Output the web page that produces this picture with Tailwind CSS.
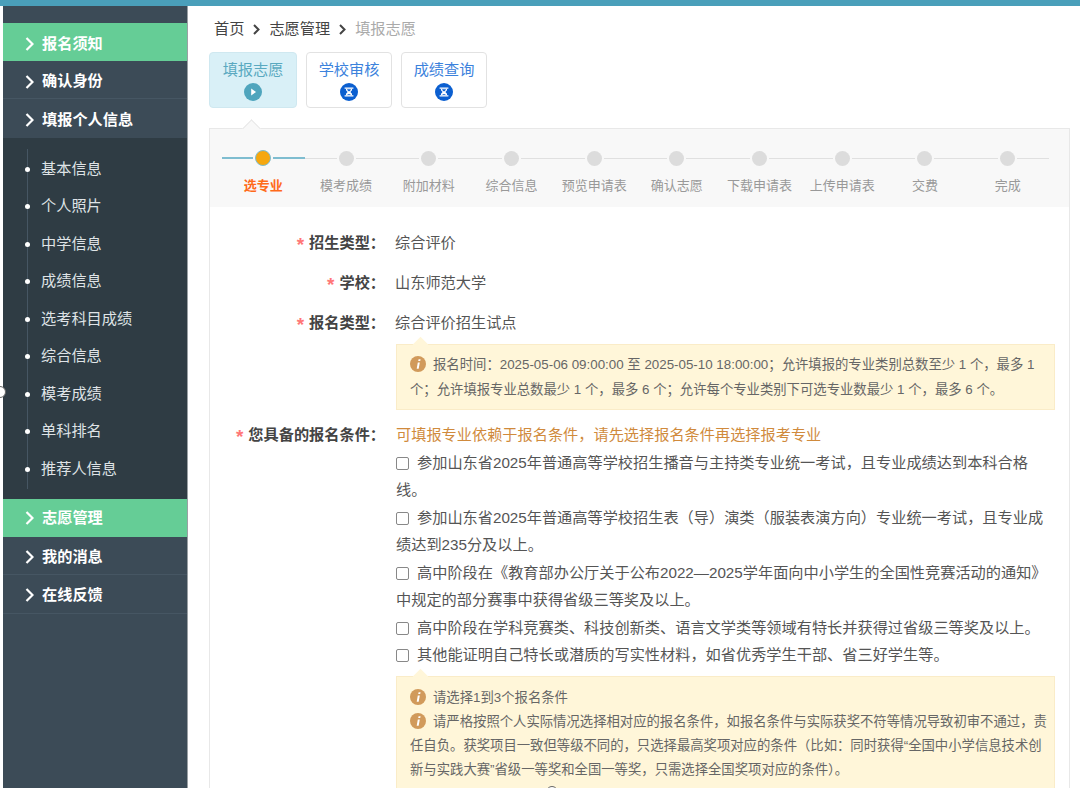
<!DOCTYPE html>
<html lang="zh">
<head>
<meta charset="utf-8">
<script src="https://cdn.jsdelivr.net/npm/@tailwindcss/browser@4"></script>
</head>
<body class="bg-white">
<div class="w-[1080px] h-[788px] overflow-hidden relative flex flex-col font-['Liberation_Sans','Noto_Sans_CJK_SC',sans-serif] text-[#555]">
  <div class="h-[6px] shrink-0 bg-[#4a9fba]"></div>
  <div class="flex flex-1 min-h-0">
    <!-- sidebar -->
    <aside class="ml-[3px] w-[185px] shrink-0 bg-[#3c4b57] border-r border-[#9aa0a4] pt-[17px] text-[15.2px] font-bold text-white flex flex-col">
      <div class="h-[38px] bg-[#65cd96] flex items-center pl-[22px] pt-[4px] gap-[8px]"><svg class="w-[9px] h-[14px]" viewBox="0 0 9 14" fill="none" stroke="currentColor" stroke-width="2.2"><path d="M1.5 1l6 6-6 6"/></svg>报名须知</div>
      <div class="h-[38px] border-b border-[#465663] flex items-center pl-[22px] pt-[4px] gap-[8px]"><svg class="w-[9px] h-[14px]" viewBox="0 0 9 14" fill="none" stroke="currentColor" stroke-width="2.2"><path d="M1.5 1l6 6-6 6"/></svg>确认身份</div>
      <div class="h-[39px] flex items-center pl-[22px] pt-[3px] gap-[8px]"><svg class="w-[9px] h-[14px]" viewBox="0 0 9 14" fill="none" stroke="currentColor" stroke-width="2.2"><path d="M1.5 1l6 6-6 6"/></svg>填报个人信息</div>
      <div class="h-[361px] bg-[#2f3c44] pt-[11px] pl-[24px] font-normal text-[#dfe3e6]">
        <div class="border-l border-[#465663] h-[340px] flex flex-col">
          <div class="h-[37.5px] flex items-center relative pl-[13px] pt-[3px]"><span class="absolute left-[-3px] w-[5px] h-[5px] rounded-full bg-white"></span>基本信息</div>
          <div class="h-[37.5px] flex items-center relative pl-[13px] pt-[3px]"><span class="absolute left-[-3px] w-[5px] h-[5px] rounded-full bg-white"></span>个人照片</div>
          <div class="h-[37.5px] flex items-center relative pl-[13px] pt-[3px]"><span class="absolute left-[-3px] w-[5px] h-[5px] rounded-full bg-white"></span>中学信息</div>
          <div class="h-[37.5px] flex items-center relative pl-[13px] pt-[3px]"><span class="absolute left-[-3px] w-[5px] h-[5px] rounded-full bg-white"></span>成绩信息</div>
          <div class="h-[37.5px] flex items-center relative pl-[13px] pt-[3px]"><span class="absolute left-[-3px] w-[5px] h-[5px] rounded-full bg-white"></span>选考科目成绩</div>
          <div class="h-[37.5px] flex items-center relative pl-[13px] pt-[3px]"><span class="absolute left-[-3px] w-[5px] h-[5px] rounded-full bg-white"></span>综合信息</div>
          <div class="h-[37.5px] flex items-center relative pl-[13px] pt-[3px]"><span class="absolute left-[-3px] w-[5px] h-[5px] rounded-full bg-white"></span>模考成绩</div>
          <div class="h-[37.5px] flex items-center relative pl-[13px] pt-[3px]"><span class="absolute left-[-3px] w-[5px] h-[5px] rounded-full bg-white"></span>单科排名</div>
          <div class="h-[37.5px] flex items-center relative pl-[13px] pt-[3px]"><span class="absolute left-[-3px] w-[5px] h-[5px] rounded-full bg-white"></span>推荐人信息</div>
        </div>
      </div>
      <div class="h-[38px] bg-[#65cd96] flex items-center pl-[22px] gap-[8px]"><svg class="w-[9px] h-[14px]" viewBox="0 0 9 14" fill="none" stroke="currentColor" stroke-width="2.2"><path d="M1.5 1l6 6-6 6"/></svg>志愿管理</div>
      <div class="h-[38px] border-b border-[#465663] flex items-center pl-[22px] pt-[3px] gap-[8px]"><svg class="w-[9px] h-[14px]" viewBox="0 0 9 14" fill="none" stroke="currentColor" stroke-width="2.2"><path d="M1.5 1l6 6-6 6"/></svg>我的消息</div>
      <div class="h-[39px] border-b border-[#465663] flex items-center pl-[22px] pt-[2px] gap-[8px]"><svg class="w-[9px] h-[14px]" viewBox="0 0 9 14" fill="none" stroke="currentColor" stroke-width="2.2"><path d="M1.5 1l6 6-6 6"/></svg>在线反馈</div>
    </aside>
    <!-- main -->
    <main class="flex-1 min-w-0 pl-[21px] pr-[10px]">
      <div class="h-[46px] pl-[5px] flex items-center gap-[9px] text-[15.2px] text-[#444]">
        <span>首页</span>
        <svg class="w-[7px] h-[11px]" viewBox="0 0 7 11" fill="none" stroke="#444" stroke-width="2"><path d="M1 1l4.5 4.5L1 10"/></svg>
        <span>志愿管理</span>
        <svg class="w-[7px] h-[11px]" viewBox="0 0 7 11" fill="none" stroke="#444" stroke-width="2"><path d="M1 1l4.5 4.5L1 10"/></svg>
        <span class="text-[#aaa]">填报志愿</span>
      </div>
      <div class="flex gap-[9px] h-[56px] text-[15.2px]">
        <div class="w-[88px] rounded-[4px] bg-[#d9f0f7] border border-[#cfe8f0] flex flex-col items-center pt-[5px] text-[#5aa9c0]">
          <span class="leading-[24px]">填报志愿</span>
          <svg class="w-[18px] h-[18px] mt-[1px]" viewBox="0 0 18 18"><circle cx="9" cy="9" r="9" fill="#4fa5bd"/><path d="M7.2 5.6l4.8 3.4-4.8 3.4z" fill="#fff"/></svg>
        </div>
        <div class="w-[86px] rounded-[4px] bg-white border border-[#e2e2e2] flex flex-col items-center pt-[5px] text-[#3c82dc]">
          <span class="leading-[24px]">学校审核</span>
          <svg class="w-[18px] h-[18px] mt-[1px]" viewBox="0 0 18 18"><circle cx="9" cy="9" r="9" fill="#0b5fd0"/><path d="M4.6 4.4h8.8v1.3H4.6zM4.6 12.3h8.8v1.3H4.6z" fill="#fff"/><path d="M6 5.7h6v1.6L10.4 9l1.6 1.7v1.6H6v-1.6L7.6 9 6 7.3z" fill="#fff"/><path d="M7.2 6.3h3.6v.7L9 8.4 7.2 7zM7.6 11h2.8v.7H7.6z" fill="#0b5fd0"/></svg>
        </div>
        <div class="w-[86px] rounded-[4px] bg-white border border-[#e2e2e2] flex flex-col items-center pt-[5px] text-[#3c82dc]">
          <span class="leading-[24px]">成绩查询</span>
          <svg class="w-[18px] h-[18px] mt-[1px]" viewBox="0 0 18 18"><circle cx="9" cy="9" r="9" fill="#0b5fd0"/><path d="M4.6 4.4h8.8v1.3H4.6zM4.6 12.3h8.8v1.3H4.6z" fill="#fff"/><path d="M6 5.7h6v1.6L10.4 9l1.6 1.7v1.6H6v-1.6L7.6 9 6 7.3z" fill="#fff"/><path d="M7.2 6.3h3.6v.7L9 8.4 7.2 7zM7.6 11h2.8v.7H7.6z" fill="#0b5fd0"/></svg>
        </div>
      </div>
      <!-- panel -->
      <div class="mt-[20px] relative border border-[#e8e8e8] border-b-0 h-[700px]">
        <span class="absolute left-[35px] top-[-7px] w-[13px] h-[13px] rotate-45 bg-[#f8f8f8] border-l border-t border-[#e8e8e8]"></span>
        <div class="h-[78px] bg-[#f8f8f8] pl-[12px] pr-[20px] pt-[20px] relative">
          <div class="flex">
            <div class="flex-1 flex flex-col items-center text-[13px]"><div class="flex items-center w-full h-[18px]"><span class="flex-1 h-[1.5px] bg-[#7fbdd0]"></span><span class="w-[16px] h-[16px] mx-[2px] rounded-full bg-[#f5a70f] border-[1.5px] border-[#7fbdd0]"></span><span class="flex-1 h-[1.5px] bg-[#7fbdd0]"></span></div><span class="mt-[9px] font-bold text-[#ff6a1a]">选专业</span></div>
            <div class="flex-1 flex flex-col items-center text-[13px]"><div class="flex items-center w-full h-[18px]"><span class="flex-1 h-px bg-[#e0e0e0]"></span><span class="w-[15px] h-[15px] mx-[2px] rounded-full bg-[#dcdcdc]"></span><span class="flex-1 h-px bg-[#e0e0e0]"></span></div><span class="mt-[9px] text-[#999]">模考成绩</span></div>
            <div class="flex-1 flex flex-col items-center text-[13px]"><div class="flex items-center w-full h-[18px]"><span class="flex-1 h-px bg-[#e0e0e0]"></span><span class="w-[15px] h-[15px] mx-[2px] rounded-full bg-[#dcdcdc]"></span><span class="flex-1 h-px bg-[#e0e0e0]"></span></div><span class="mt-[9px] text-[#999]">附加材料</span></div>
            <div class="flex-1 flex flex-col items-center text-[13px]"><div class="flex items-center w-full h-[18px]"><span class="flex-1 h-px bg-[#e0e0e0]"></span><span class="w-[15px] h-[15px] mx-[2px] rounded-full bg-[#dcdcdc]"></span><span class="flex-1 h-px bg-[#e0e0e0]"></span></div><span class="mt-[9px] text-[#999]">综合信息</span></div>
            <div class="flex-1 flex flex-col items-center text-[13px]"><div class="flex items-center w-full h-[18px]"><span class="flex-1 h-px bg-[#e0e0e0]"></span><span class="w-[15px] h-[15px] mx-[2px] rounded-full bg-[#dcdcdc]"></span><span class="flex-1 h-px bg-[#e0e0e0]"></span></div><span class="mt-[9px] text-[#999]">预览申请表</span></div>
            <div class="flex-1 flex flex-col items-center text-[13px]"><div class="flex items-center w-full h-[18px]"><span class="flex-1 h-px bg-[#e0e0e0]"></span><span class="w-[15px] h-[15px] mx-[2px] rounded-full bg-[#dcdcdc]"></span><span class="flex-1 h-px bg-[#e0e0e0]"></span></div><span class="mt-[9px] text-[#999]">确认志愿</span></div>
            <div class="flex-1 flex flex-col items-center text-[13px]"><div class="flex items-center w-full h-[18px]"><span class="flex-1 h-px bg-[#e0e0e0]"></span><span class="w-[15px] h-[15px] mx-[2px] rounded-full bg-[#dcdcdc]"></span><span class="flex-1 h-px bg-[#e0e0e0]"></span></div><span class="mt-[9px] text-[#999]">下载申请表</span></div>
            <div class="flex-1 flex flex-col items-center text-[13px]"><div class="flex items-center w-full h-[18px]"><span class="flex-1 h-px bg-[#e0e0e0]"></span><span class="w-[15px] h-[15px] mx-[2px] rounded-full bg-[#dcdcdc]"></span><span class="flex-1 h-px bg-[#e0e0e0]"></span></div><span class="mt-[9px] text-[#999]">上传申请表</span></div>
            <div class="flex-1 flex flex-col items-center text-[13px]"><div class="flex items-center w-full h-[18px]"><span class="flex-1 h-px bg-[#e0e0e0]"></span><span class="w-[15px] h-[15px] mx-[2px] rounded-full bg-[#dcdcdc]"></span><span class="flex-1 h-px bg-[#e0e0e0]"></span></div><span class="mt-[9px] text-[#999]">交费</span></div>
            <div class="flex-1 flex flex-col items-center text-[13px]"><div class="flex items-center w-full h-[18px]"><span class="flex-1 h-px bg-[#e0e0e0]"></span><span class="w-[15px] h-[15px] mx-[2px] rounded-full bg-[#dcdcdc]"></span><span class="flex-1 h-px bg-[#e0e0e0]"></span></div><span class="mt-[9px] text-[#999]">完成</span></div>
          </div>
        </div>
        <!-- form -->
        <div class="pt-[22px] text-[15.2px] leading-[27.5px] text-[#555]">
          <div class="flex h-[40px]"><div class="w-[175px] text-right font-bold text-[#444] shrink-0"><span class="text-[#f77] mr-[5px] text-[19px] leading-none align-[-3px]">*</span>招生类型&#xFF1A;</div><div class="ml-[10px]">综合评价</div></div>
          <div class="flex h-[40px]"><div class="w-[175px] text-right font-bold text-[#444] shrink-0"><span class="text-[#f77] mr-[5px] text-[19px] leading-none align-[-3px]">*</span>学校&#xFF1A;</div><div class="ml-[10px]">山东师范大学</div></div>
          <div class="flex h-[35px]"><div class="w-[175px] text-right font-bold text-[#444] shrink-0"><span class="text-[#f77] mr-[5px] text-[19px] leading-none align-[-3px]">*</span>报名类型&#xFF1A;</div><div class="ml-[10px]">综合评价招生试点</div></div>
          <div class="ml-[186px] w-[659px] h-[66px] relative bg-[#fff6d9] border border-[#faecc8] pl-[13px] pr-[7px] pt-[7px] text-[13.35px] leading-[25px] text-[#666]">
            <span class="absolute left-[18px] top-[-6px] w-[11px] h-[11px] rotate-45 bg-[#fff6d9]"></span>
            <svg class="inline-block w-[16px] h-[16px] mr-[7px] align-[-3px] relative" viewBox="0 0 16 16"><circle cx="8" cy="8" r="8" fill="#d19a5b"/><path d="M8.6 3.2h2l-.4 1.8h-2zM7.8 6.4h2L8.7 12.8H6.7z" fill="#fff"/></svg>报名时间&#xFF1A;2025-05-06 09:00:00 至 2025-05-10 18:00:00&#xFF1B;允许填报的专业类别总数至少 1 个&#xFF0C;最多 1 个&#xFF1B;允许填报专业总数最少 1 个&#xFF0C;最多 6 个&#xFF1B;允许每个专业类别下可选专业数最少 1 个&#xFF0C;最多 6 个。
          </div>
          <div class="flex mt-[11px]">
            <div class="w-[175px] text-right font-bold text-[#444] shrink-0"><span class="text-[#f77] mr-[5px] text-[19px] leading-none align-[-3px]">*</span>您具备的报名条件&#xFF1A;</div>
            <div class="ml-[11px] w-[659px]">
              <div class="text-[#d08a3c]">可填报专业依赖于报名条件&#xFF0C;请先选择报名条件再选择报考专业</div>
              <div><span class="inline-block w-[13px] h-[13px] rounded-[2px] border border-[#888] bg-white mr-[8px] align-[-2px]"></span>参加山东省2025年普通高等学校招生播音与主持类专业统一考试&#xFF0C;且专业成绩达到本科合格线。</div>
              <div><span class="inline-block w-[13px] h-[13px] rounded-[2px] border border-[#888] bg-white mr-[8px] align-[-2px]"></span>参加山东省2025年普通高等学校招生表&#xFF08;导&#xFF09;演类&#xFF08;服装表演方向&#xFF09;专业统一考试&#xFF0C;且专业成绩达到235分及以上。</div>
              <div><span class="inline-block w-[13px] h-[13px] rounded-[2px] border border-[#888] bg-white mr-[8px] align-[-2px]"></span>高中阶段在《教育部办公厅关于公布2022—2025学年面向中小学生的全国性竞赛活动的通知》中规定的部分赛事中获得省级三等奖及以上。</div>
              <div><span class="inline-block w-[13px] h-[13px] rounded-[2px] border border-[#888] bg-white mr-[8px] align-[-2px]"></span>高中阶段在学科竞赛类、科技创新类、语言文学类等领域有特长并获得过省级三等奖及以上。</div>
              <div><span class="inline-block w-[13px] h-[13px] rounded-[2px] border border-[#888] bg-white mr-[8px] align-[-2px]"></span>其他能证明自己特长或潜质的写实性材料&#xFF0C;如省优秀学生干部、省三好学生等。</div>
              <div class="mt-[7px] h-[113px] relative bg-[#fff6d9] border border-[#faecc8] pl-[13px] pr-[7px] pt-[9px] text-[13.35px] leading-[24px] text-[#666]">
                <span class="absolute left-[18px] top-[-6px] w-[11px] h-[11px] rotate-45 bg-[#fff6d9]"></span>
                <div class="relative"><svg class="inline-block w-[16px] h-[16px] mr-[7px] align-[-3px]" viewBox="0 0 16 16"><circle cx="8" cy="8" r="8" fill="#d19a5b"/><path d="M8.6 3.2h2l-.4 1.8h-2zM7.8 6.4h2L8.7 12.8H6.7z" fill="#fff"/></svg>请选择1到3个报名条件</div>
                <div><svg class="inline-block w-[16px] h-[16px] mr-[7px] align-[-3px]" viewBox="0 0 16 16"><circle cx="8" cy="8" r="8" fill="#d19a5b"/><path d="M8.6 3.2h2l-.4 1.8h-2zM7.8 6.4h2L8.7 12.8H6.7z" fill="#fff"/></svg>请严格按照个人实际情况选择相对应的报名条件&#xFF0C;如报名条件与实际获奖不符等情况导致初审不通过&#xFF0C;责任自负。获奖项目一致但等级不同的&#xFF0C;只选择最高奖项对应的条件&#xFF08;比如&#xFF1A;同时获得“全国中小学信息技术创新与实践大赛”省级一等奖和全国一等奖&#xFF0C;只需选择全国奖项对应的条件&#xFF09;。</div>
              </div>
            </div>
          </div>
        </div>
      </div>
    </main>
  </div>
  <span class="absolute left-[-6px] top-[386px] w-[12px] h-[12px] rounded-full bg-white border border-[#666]"></span>
  <span class="absolute left-[546px] top-[786px] w-[12px] h-[12px] rounded-full bg-white border border-[#666]"></span>
</div>
</body>
</html>
